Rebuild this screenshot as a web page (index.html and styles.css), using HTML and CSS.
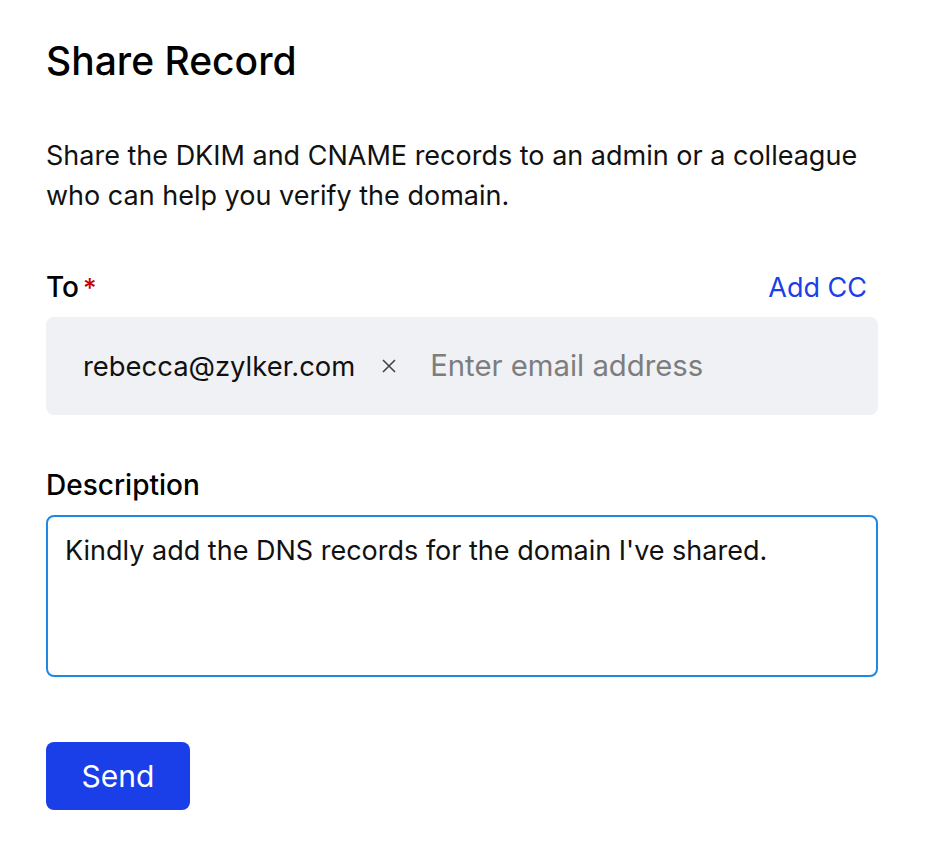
FILE: index.html
```html
<!DOCTYPE html>
<html>
<head>
    <title>Share Record</title>
    <link rel="stylesheet" href="styles.css">
</head>
<body>
    <div class="dialog">
        <h1 class="title">Share Record</h1>
        <p class="intro">Share the DKIM and CNAME records to an admin or a colleague who can help you verify the domain.</p>

        <div class="field-head">
            <label class="field-label">To<span class="required">*</span></label>
            <a class="add-cc" href="#">Add CC</a>
        </div>
        <div class="recipients">
            <span class="chip">rebecca@zylker.com
                <svg class="chip-remove" width="16" height="16" viewBox="0 0 16 16">
                    <path d="M2 2 L14 14 M14 2 L2 14" stroke="#444" stroke-width="1.6" fill="none"/>
                </svg>
            </span>
            <input type="text" class="email-input" placeholder="Enter email address">
        </div>

        <div class="field-head desc-head">
            <label class="field-label">Description</label>
        </div>
        <textarea class="description">Kindly add the DNS records for the domain I've shared.</textarea>

        <button class="send-btn">Send</button>
    </div>
</body>
</html>
```

FILE: styles.css
```css
body {
    margin: 0;
    font-family: Inter, "Noto Sans", sans-serif;
    color: #111;
    background: #fff;
}

.dialog {
    width: 832px;
    padding: 37px 0 40px 46px;
}

.title {
    margin: 0;
    font-size: 39px;
    line-height: 48px;
    font-weight: 500;
    color: #000;
}

.intro {
    margin: 51px 0 0;
    font-size: 27px;
    line-height: 40px;
    color: #111;
}

.field-head {
    display: flex;
    justify-content: space-between;
    align-items: center;
    margin-top: 51px;
    height: 40px;
}
.desc-head {
    margin-top: 50px;
}

.field-label {
    font-size: 28px;
    line-height: 40px;
    font-weight: 500;
    color: #000;
}
.required {
    color: #c00000;
    margin-left: 4px;
    font-size: 26px;
}

.add-cc {
    margin-right: 11px;
    font-size: 27px;
    color: #1a40e6;
    text-decoration: none;
}

.recipients {
    display: flex;
    align-items: center;
    height: 98px;
    margin-top: 10px;
    padding: 0 0 0 37px;
    background: #f0f1f5;
    border-radius: 8px;
    box-sizing: border-box;
}

.chip {
    display: flex;
    align-items: center;
    font-size: 27.4px;
    line-height: 40px;
    color: #111;
}
.chip-remove {
    margin-left: 26px;
}

.email-input {
    flex-grow: 1;
    margin-left: 33px;
    border: none;
    background: transparent;
    font-family: inherit;
    font-size: 29.3px;
    line-height: 40px;
    padding: 0;
    outline: none;
}
.email-input::placeholder {
    color: #7d7d7d;
}

.description {
    display: block;
    width: 832px;
    height: 162px;
    margin-top: 10px;
    padding: 14px 17px;
    box-sizing: border-box;
    border: 2px solid #1e88e5;
    border-radius: 8px;
    font-family: inherit;
    font-size: 27px;
    line-height: 40px;
    color: #111;
    resize: none;
    outline: none;
}

.send-btn {
    display: block;
    width: 144px;
    height: 68px;
    margin-top: 65px;
    border: none;
    border-radius: 8px;
    background: #1a3fe9;
    color: #fff;
    font-family: inherit;
    font-size: 30px;
    cursor: pointer;
}
```
